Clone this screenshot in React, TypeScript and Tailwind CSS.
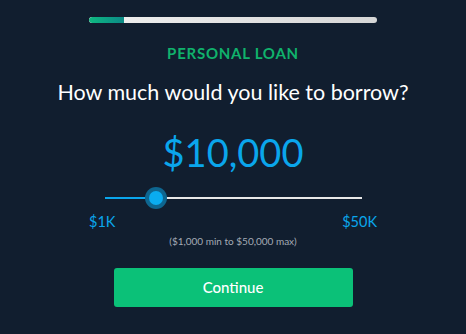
export default function App() {
  return (
    <div
      className="flex h-[334px] w-[466px] flex-col items-center bg-[#111e2f] text-white"
      style={{ fontFamily: 'Lato, "Noto Sans", sans-serif' }}
    >
      {/* Progress */}
      <div className="mt-[17px] h-[6px] w-[288px] overflow-hidden rounded-full bg-gradient-to-r from-[#f0f0f0] to-[#d6d6d6]">
        <div className="h-full w-[35px] rounded-l-full bg-gradient-to-r from-[#10b981] to-[#0d8a86]" />
      </div>

      <div className="mt-[20px] text-[15px] font-bold leading-[20px] tracking-[0.05em] text-[#10b26c]">PERSONAL LOAN</div>

      <h1 className="mt-[15px] text-[21.5px] leading-[28px]">How much would you like to borrow?</h1>

      <div className="mt-[24px] text-[38px] leading-[44px] text-[#0aa6ec]">$10,000</div>

      {/* Slider */}
      <div className="relative mt-[13px] h-[22px] w-[257px]">
        <div className="absolute left-0 right-0 top-[10px] h-[2px] bg-[#e8e8e8]" />
        <div className="absolute left-0 top-[10px] h-[2px] w-[51px] bg-[#0aa6ec]" />
        <div className="absolute left-[40px] top-0 flex h-[22px] w-[22px] items-center justify-center rounded-full bg-[#0e6690]">
          <div className="h-[14px] w-[14px] rounded-full bg-[#0aacf0]" />
        </div>
      </div>

      <div className="mt-[4px] flex w-[288px] justify-between text-[14.5px] leading-[18px] text-[#0aa6ec]">
        <span>$1K</span>
        <span>$50K</span>
      </div>

      <div className="mt-[3px] text-[10px] leading-[14px] text-[#a4abb5]">($1,000 min to $50,000 max)</div>

      <button className="mt-[20px] h-[39px] w-[239px] rounded-[3px] bg-[#0bc178] text-[15px] font-medium text-white">
        Continue
      </button>
    </div>
  );
}
